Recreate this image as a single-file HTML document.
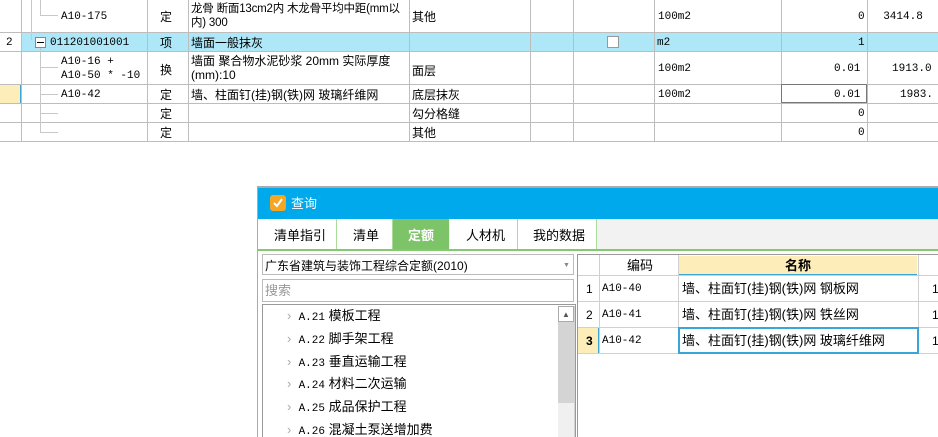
<html style="overflow:hidden;height:437px"><head><style>
body{margin:0;width:938px;height:437px;background:#fff;position:relative;overflow:hidden;font-family:"Liberation Sans","Noto Sans CJK SC",sans-serif;font-size:12px;color:#000}
.a{position:absolute}
.hl{position:absolute;height:1px;background:#bdbdbd}
.vl{position:absolute;width:1px;background:#bdbdbd}
.t{position:absolute;white-space:nowrap;line-height:14px}
.m{font-family:"Liberation Mono","Noto Sans CJK SC",monospace;font-size:11px}
.tree{position:absolute;background:#c8c8c8}
</style></head><body>
<div class="a" style="left:21px;top:32px;width:917px;height:19px;background:#aee8f8"></div>
<div class="a" style="left:0;top:84px;width:21px;height:19px;background:#fdedb8"></div>
<div class="a" style="left:20px;top:84px;width:2px;height:19px;background:#3aa6d8"></div>
<div class="hl" style="left:0;top:32px;width:938px"></div>
<div class="hl" style="left:0;top:51px;width:938px"></div>
<div class="hl" style="left:0;top:84px;width:938px"></div>
<div class="hl" style="left:0;top:103px;width:938px"></div>
<div class="hl" style="left:0;top:122px;width:938px"></div>
<div class="hl" style="left:0;top:141px;width:938px"></div>
<div class="vl" style="left:21px;top:0;height:141px"></div>
<div class="vl" style="left:147px;top:0;height:141px"></div>
<div class="vl" style="left:188px;top:0;height:141px"></div>
<div class="vl" style="left:409px;top:0;height:141px"></div>
<div class="vl" style="left:530px;top:0;height:141px"></div>
<div class="vl" style="left:573px;top:0;height:141px"></div>
<div class="vl" style="left:654px;top:0;height:141px"></div>
<div class="vl" style="left:781px;top:0;height:141px"></div>
<div class="vl" style="left:867px;top:0;height:141px"></div>
<div class="tree" style="left:31px;top:0;width:1px;height:40px"></div>
<div class="tree" style="left:40px;top:0;width:1px;height:16px"></div>
<div class="tree" style="left:40px;top:15px;width:18px;height:1px"></div>
<div class="tree" style="left:40px;top:47px;width:1px;height:85px"></div>
<div class="tree" style="left:40px;top:67px;width:18px;height:1px"></div>
<div class="tree" style="left:40px;top:94px;width:18px;height:1px"></div>
<div class="tree" style="left:40px;top:113px;width:18px;height:1px"></div>
<div class="tree" style="left:40px;top:132px;width:18px;height:1px"></div>
<div class="a" style="left:35px;top:37px;width:9px;height:9px;border:1px solid #888;background:#fff"></div>
<div class="a" style="left:37px;top:42px;width:7px;height:1px;background:#000"></div>
<div class="t m" style="left:61px;top:10px">A10-175</div>
<div class="t" style="left:160px;top:10px">定</div>
<div class="t" style="left:191px;top:2px;font-size:11.5px;letter-spacing:-0.2px">龙骨 断面13cm2内 木龙骨平均中距(mm以<br>内) 300</div>
<div class="t" style="left:412px;top:10px">其他</div>
<div class="t m" style="left:658px;top:10px">100m2</div>
<div class="t m" style="left:858px;top:10px">0</div>
<div class="t m" style="left:870px;top:10px">&nbsp;&nbsp;3414.8</div>
<div class="t m" style="left:6px;top:36px">2</div>
<div class="t m" style="left:50px;top:36px">011201001001</div>
<div class="t" style="left:160px;top:36px">项</div>
<div class="t" style="left:191px;top:36px">墙面一般抹灰</div>
<div class="a" style="left:607px;top:36px;width:10px;height:10px;border:1px solid #999;background:#fff"></div>
<div class="t m" style="left:657px;top:36px">m2</div>
<div class="t m" style="left:858px;top:36px">1</div>
<div class="t m" style="left:61px;top:55px">A10-16 +<br>A10-50 * -10</div>
<div class="t" style="left:160px;top:63px">换</div>
<div class="t" style="left:191px;top:54px">墙面 聚合物水泥砂浆 20mm  实际厚度<br>(mm):10</div>
<div class="t" style="left:412px;top:64px">面层</div>
<div class="t m" style="left:658px;top:62px">100m2</div>
<div class="t m" style="left:834px;top:62px">0.01</div>
<div class="t m" style="left:892px;top:62px">1913.0</div>
<div class="t m" style="left:61px;top:88px">A10-42</div>
<div class="t" style="left:160px;top:88px">定</div>
<div class="t" style="left:191px;top:88px">墙、柱面钉(挂)钢(铁)网 玻璃纤维网</div>
<div class="t" style="left:412px;top:88px">底层抹灰</div>
<div class="t m" style="left:658px;top:88px">100m2</div>
<div class="a" style="left:781px;top:84px;width:84px;height:17px;border:1px solid #777"></div>
<div class="t m" style="left:834px;top:88px">0.01</div>
<div class="t m" style="left:900px;top:88px">1983.</div>
<div class="t" style="left:160px;top:107px">定</div>
<div class="t" style="left:412px;top:107px">勾分格缝</div>
<div class="t m" style="left:858px;top:107px">0</div>
<div class="t" style="left:160px;top:126px">定</div>
<div class="t" style="left:412px;top:126px">其他</div>
<div class="t m" style="left:858px;top:126px">0</div>
<div class="a" style="left:257px;top:186px;width:681px;height:251px;background:#fff;border-top:2px solid #aaa;border-left:1px solid #aaa;box-sizing:border-box"></div>
<div class="a" style="left:258px;top:188px;width:680px;height:31px;background:#00a8ec"></div>
<div class="a" style="left:270px;top:195px;width:16px;height:16px;background:#f5a623;border-radius:3px"></div>
<svg class="a" style="left:270px;top:195px" width="16" height="16"><path d="M4 8 L7 11 L12 4" stroke="#fff" stroke-width="2" fill="none"/></svg>
<div class="t" style="left:291px;top:197px;color:#fff;font-size:13px">查询</div>
<div class="a" style="left:258px;top:219px;width:680px;height:30px;background:#f2f2f2;border-bottom:2px solid #84c86f"></div>
<div class="a" style="left:258px;top:219px;width:78px;height:30px;background:#fff;border-right:1px solid #a8dc98"></div>
<div class="a" style="left:337px;top:219px;width:55px;height:30px;background:#fff;border-right:1px solid #a8dc98"></div>
<div class="a" style="left:393px;top:219px;width:56px;height:30px;background:#7dc468"></div>
<div class="a" style="left:450px;top:219px;width:67px;height:30px;background:#fff;border-right:1px solid #a8dc98"></div>
<div class="a" style="left:518px;top:219px;width:78px;height:30px;background:#fff;border-right:1px solid #a8dc98"></div>
<div class="t" style="left:274px;top:229px;font-size:13px">清单指引</div>
<div class="t" style="left:353px;top:229px;font-size:13px">清单</div>
<div class="t" style="left:408px;top:229px;font-size:13px;color:#fff;font-weight:bold">定额</div>
<div class="t" style="left:466px;top:229px;font-size:13px">人材机</div>
<div class="t" style="left:533px;top:229px;font-size:13px">我的数据</div>
<div class="a" style="left:262px;top:254px;width:310px;height:19px;border:1px solid #bbb"></div>
<div class="t" style="left:265px;top:259px">广东省建筑与装饰工程综合定额(2010)</div>
<div class="t" style="left:563px;top:259px;font-size:7px;color:#888">▼</div>
<div class="a" style="left:262px;top:279px;width:310px;height:21px;border:1px solid #bbb"></div>
<div class="t" style="left:265px;top:284px;color:#999;font-size:13px">搜索</div>
<div class="a" style="left:262px;top:304px;width:312px;height:132px;border:1px solid #999;border-bottom:none;overflow:hidden">
<div class="a" style="left:295px;top:1px;width:17px;height:131px;background:#d4d4d4"></div>
<div class="a" style="left:295px;top:1px;width:16px;height:16px;background:#fff;border:1px solid #aaa;box-sizing:border-box"></div>
<div class="t" style="left:299px;top:3px;font-size:8px;color:#555">▲</div>
<div class="a" style="left:295px;top:98px;width:16px;height:34px;background:#f0f0f0"></div>
<div class="t" style="left:24px;top:1px;height:130px;overflow:hidden;line-height:20.8px;font-size:13px"><span style="color:#aaa">›</span>&nbsp;&nbsp;<span class="m">A.21</span> 模板工程<br><span style="color:#aaa">›</span>&nbsp;&nbsp;<span class="m">A.22</span> 脚手架工程<br><span style="color:#aaa">›</span>&nbsp;&nbsp;<span class="m">A.23</span> 垂直运输工程<br><span style="color:#aaa">›</span>&nbsp;&nbsp;<span class="m">A.24</span> 材料二次运输<br><span style="color:#aaa">›</span>&nbsp;&nbsp;<span class="m">A.25</span> 成品保护工程<br><span style="color:#aaa">›</span>&nbsp;&nbsp;<span class="m">A.26</span> 混凝土泵送增加费</div>
</div>
<div class="a" style="left:577px;top:254px;width:361px;height:183px;border-left:1px solid #999;border-top:1px solid #999;box-sizing:border-box"></div>
<div class="a" style="left:679px;top:256px;width:238px;height:18px;background:#fdedb8;border-bottom:2px solid #3aa6d8"></div>
<div class="a" style="left:578px;top:327px;width:20px;height:26px;background:#fdedb8"></div>
<div class="a" style="left:598px;top:327px;width:2px;height:26px;background:#3aa6d8"></div>
<div class="hl" style="left:578px;top:275px;width:360px;background:#d0d0d0"></div>
<div class="hl" style="left:578px;top:301px;width:360px;background:#d0d0d0"></div>
<div class="hl" style="left:578px;top:327px;width:360px;background:#d0d0d0"></div>
<div class="hl" style="left:578px;top:353px;width:360px;background:#d0d0d0"></div>
<div class="vl" style="left:599px;top:255px;height:98px;background:#d0d0d0"></div>
<div class="vl" style="left:678px;top:255px;height:98px;background:#d0d0d0"></div>
<div class="vl" style="left:918px;top:255px;height:98px;background:#d0d0d0"></div>
<div class="a" style="left:678px;top:327px;width:237px;height:23px;border:2px solid #3aa6d8"></div>
<div class="t" style="left:627px;top:259px;font-size:13px">编码</div>
<div class="t" style="left:785px;top:259px;font-size:13px;font-weight:bold">名称</div>
<div class="t" style="left:586px;top:282px">1</div>
<div class="t" style="left:586px;top:308px">2</div>
<div class="t" style="left:586px;top:334px;font-weight:bold">3</div>
<div class="t m" style="left:602px;top:282px">A10-40</div>
<div class="t m" style="left:602px;top:308px">A10-41</div>
<div class="t m" style="left:602px;top:334px">A10-42</div>
<div class="t" style="left:682px;top:282px;font-size:13px">墙、柱面钉(挂)钢(铁)网 钢板网</div>
<div class="t" style="left:682px;top:308px;font-size:13px">墙、柱面钉(挂)钢(铁)网 铁丝网</div>
<div class="t" style="left:682px;top:334px;font-size:13px">墙、柱面钉(挂)钢(铁)网 玻璃纤维网</div>
<div class="t" style="left:932px;top:282px">1</div>
<div class="t" style="left:932px;top:308px">1</div>
<div class="t" style="left:932px;top:334px">1</div>
</body></html>
